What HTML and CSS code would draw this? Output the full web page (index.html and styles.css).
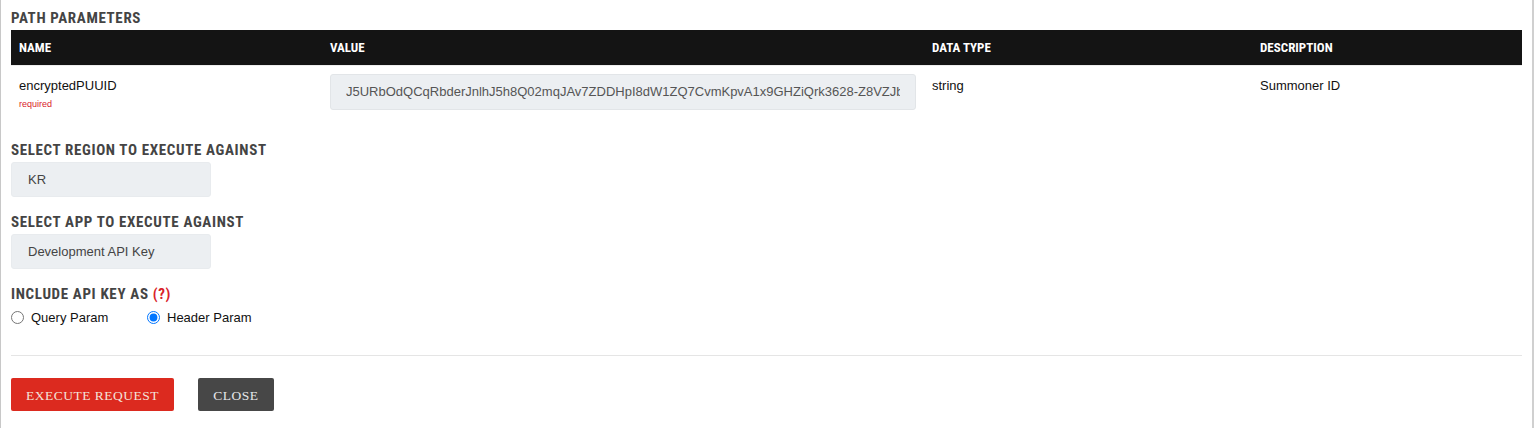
FILE: index.html
```html
<!DOCTYPE html>
<html lang="en">
<head>
<meta charset="utf-8">
<title>Path parameters</title>
<link rel="stylesheet" href="styles.css">
</head>
<body>
<div class="panel">
  <h4 class="section-title">PATH PARAMETERS</h4>
  <table class="params">
    <colgroup>
      <col class="c-name"><col class="c-value"><col class="c-type"><col class="c-desc">
    </colgroup>
    <thead>
      <tr><th>NAME</th><th>VALUE</th><th>DATA TYPE</th><th>DESCRIPTION</th></tr>
    </thead>
    <tbody>
      <tr>
        <td class="name-cell">
          <div class="param-name">encryptedPUUID</div>
          <div class="required">required</div>
        </td>
        <td><input class="value-input" type="text" value="J5URbOdQCqRbderJnlhJ5h8Q02mqJAv7ZDDHpI8dW1ZQ7CvmKpvA1x9GHZiQrk3628-Z8VZJb5Xw"></td>
        <td class="plain">string</td>
        <td class="plain">Summoner ID</td>
      </tr>
    </tbody>
  </table>

  <div class="field first">
    <div class="field-label">SELECT REGION TO EXECUTE AGAINST</div>
    <div class="select-box">KR</div>
  </div>
  <div class="field">
    <div class="field-label">SELECT APP TO EXECUTE AGAINST</div>
    <div class="select-box">Development API Key</div>
  </div>
  <div class="field">
    <div class="field-label">INCLUDE API KEY AS <span class="help">(?)</span></div>
    <div class="radios">
      <label class="radio"><input type="radio" name="keyas"> Query Param</label>
      <label class="radio"><input type="radio" name="keyas" checked> Header Param</label>
    </div>
  </div>

  <hr class="divider">

  <div class="actions">
    <button class="btn btn-red">EXECUTE REQUEST</button>
    <button class="btn btn-dark">CLOSE</button>
  </div>
</div>
</body>
</html>
```

FILE: styles.css
```css
html, body {
  margin: 0;
  padding: 0;
  background: #fff;
}
body {
  font-family: "Liberation Sans", Arial, sans-serif;
  color: #111;
}
.panel {
  width: 1511px;
  border-left: 1px solid #c8c8c8;
  border-right: 2px solid #d0d0d0;
  padding: 0 10px 17px 10px;
  min-height: 411px;
}
.section-title, .field-label {
  font-family: "Roboto Condensed", "Liberation Sans Narrow", "DejaVu Sans Condensed", Roboto, sans-serif;
  font-stretch: condensed;
  font-weight: 700;
  font-size: 15px;
  letter-spacing: 0.65px;
  line-height: 20px;
  color: #444;
  margin: 0;
}
.section-title {
  padding-top: 8px;
  margin-bottom: 2px;
}
.params {
  width: 100%;
  border-collapse: collapse;
  table-layout: fixed;
}
.c-name { width: 311px; }
.c-value { width: 602px; }
.c-type { width: 328px; }
.c-desc { width: auto; }
.params th {
  background: #141414;
  color: #fff;
  font-family: "Roboto Condensed", "Liberation Sans Narrow", Roboto, sans-serif;
  font-stretch: condensed;
  font-weight: 700;
  font-size: 13px;
  text-align: left;
  height: 35px;
  padding: 0 8px;
  box-sizing: border-box;
  border-bottom: 1px solid #eee;
}
.params td {
  vertical-align: top;
  padding: 8px 8px;
  font-size: 13px;
}
.param-name {
  line-height: 20px;
  margin-top: 2px;
}
.required {
  color: #d9222a;
  font-size: 9px;
  line-height: 12px;
  margin-top: 2px;
}
.plain {
  line-height: 24px;
}
.value-input {
  display: block;
  width: 100%;
  height: 36px;
  box-sizing: border-box;
  background: #eceff2;
  border: 1px solid #e2e5e8;
  border-radius: 3px;
  padding: 0 15px;
  font-family: "Liberation Sans", Arial, sans-serif;
  font-size: 13px;
  color: #555;
  outline: none;
}
.field {
  margin-top: 15px;
}
.field.first {
  margin-top: 22px;
}
.select-box {
  width: 200px;
  height: 35px;
  box-sizing: border-box;
  margin-top: 2px;
  background: #eceff2;
  border: 1px solid #e8ebee;
  border-radius: 3px;
  padding: 0 16px;
  display: flex;
  align-items: center;
  font-size: 13px;
  color: #444;
}
.help {
  color: #d9222a;
}
.radios {
  display: flex;
  margin-top: 5px;
  height: 18px;
  align-items: center;
}
.radio {
  display: flex;
  align-items: center;
  font-size: 13px;
  color: #111;
  width: 136px;
  gap: 3px;
}
.radio input {
  margin: 0 4px 0 0;
  width: 13px;
  height: 13px;
}
.divider {
  border: 0;
  border-top: 1px solid #e5e5e5;
  margin: 28px 0 22px 0;
}
.actions {
  display: flex;
  gap: 24px;
}
.btn {
  height: 33px;
  border: 0;
  border-radius: 2px;
  font-family: "Liberation Serif", "Times New Roman", serif;
  font-size: 13.5px;
  letter-spacing: 0.5px;
  white-space: nowrap;
  color: #f3e2da;
  padding: 3px 0 0 0;
  cursor: pointer;
}
.btn-red {
  background: #dc2a1f;
  width: 163px;
}
.btn-dark {
  background: #474747;
  width: 76px;
  color: #e6e8ea;
}
```
